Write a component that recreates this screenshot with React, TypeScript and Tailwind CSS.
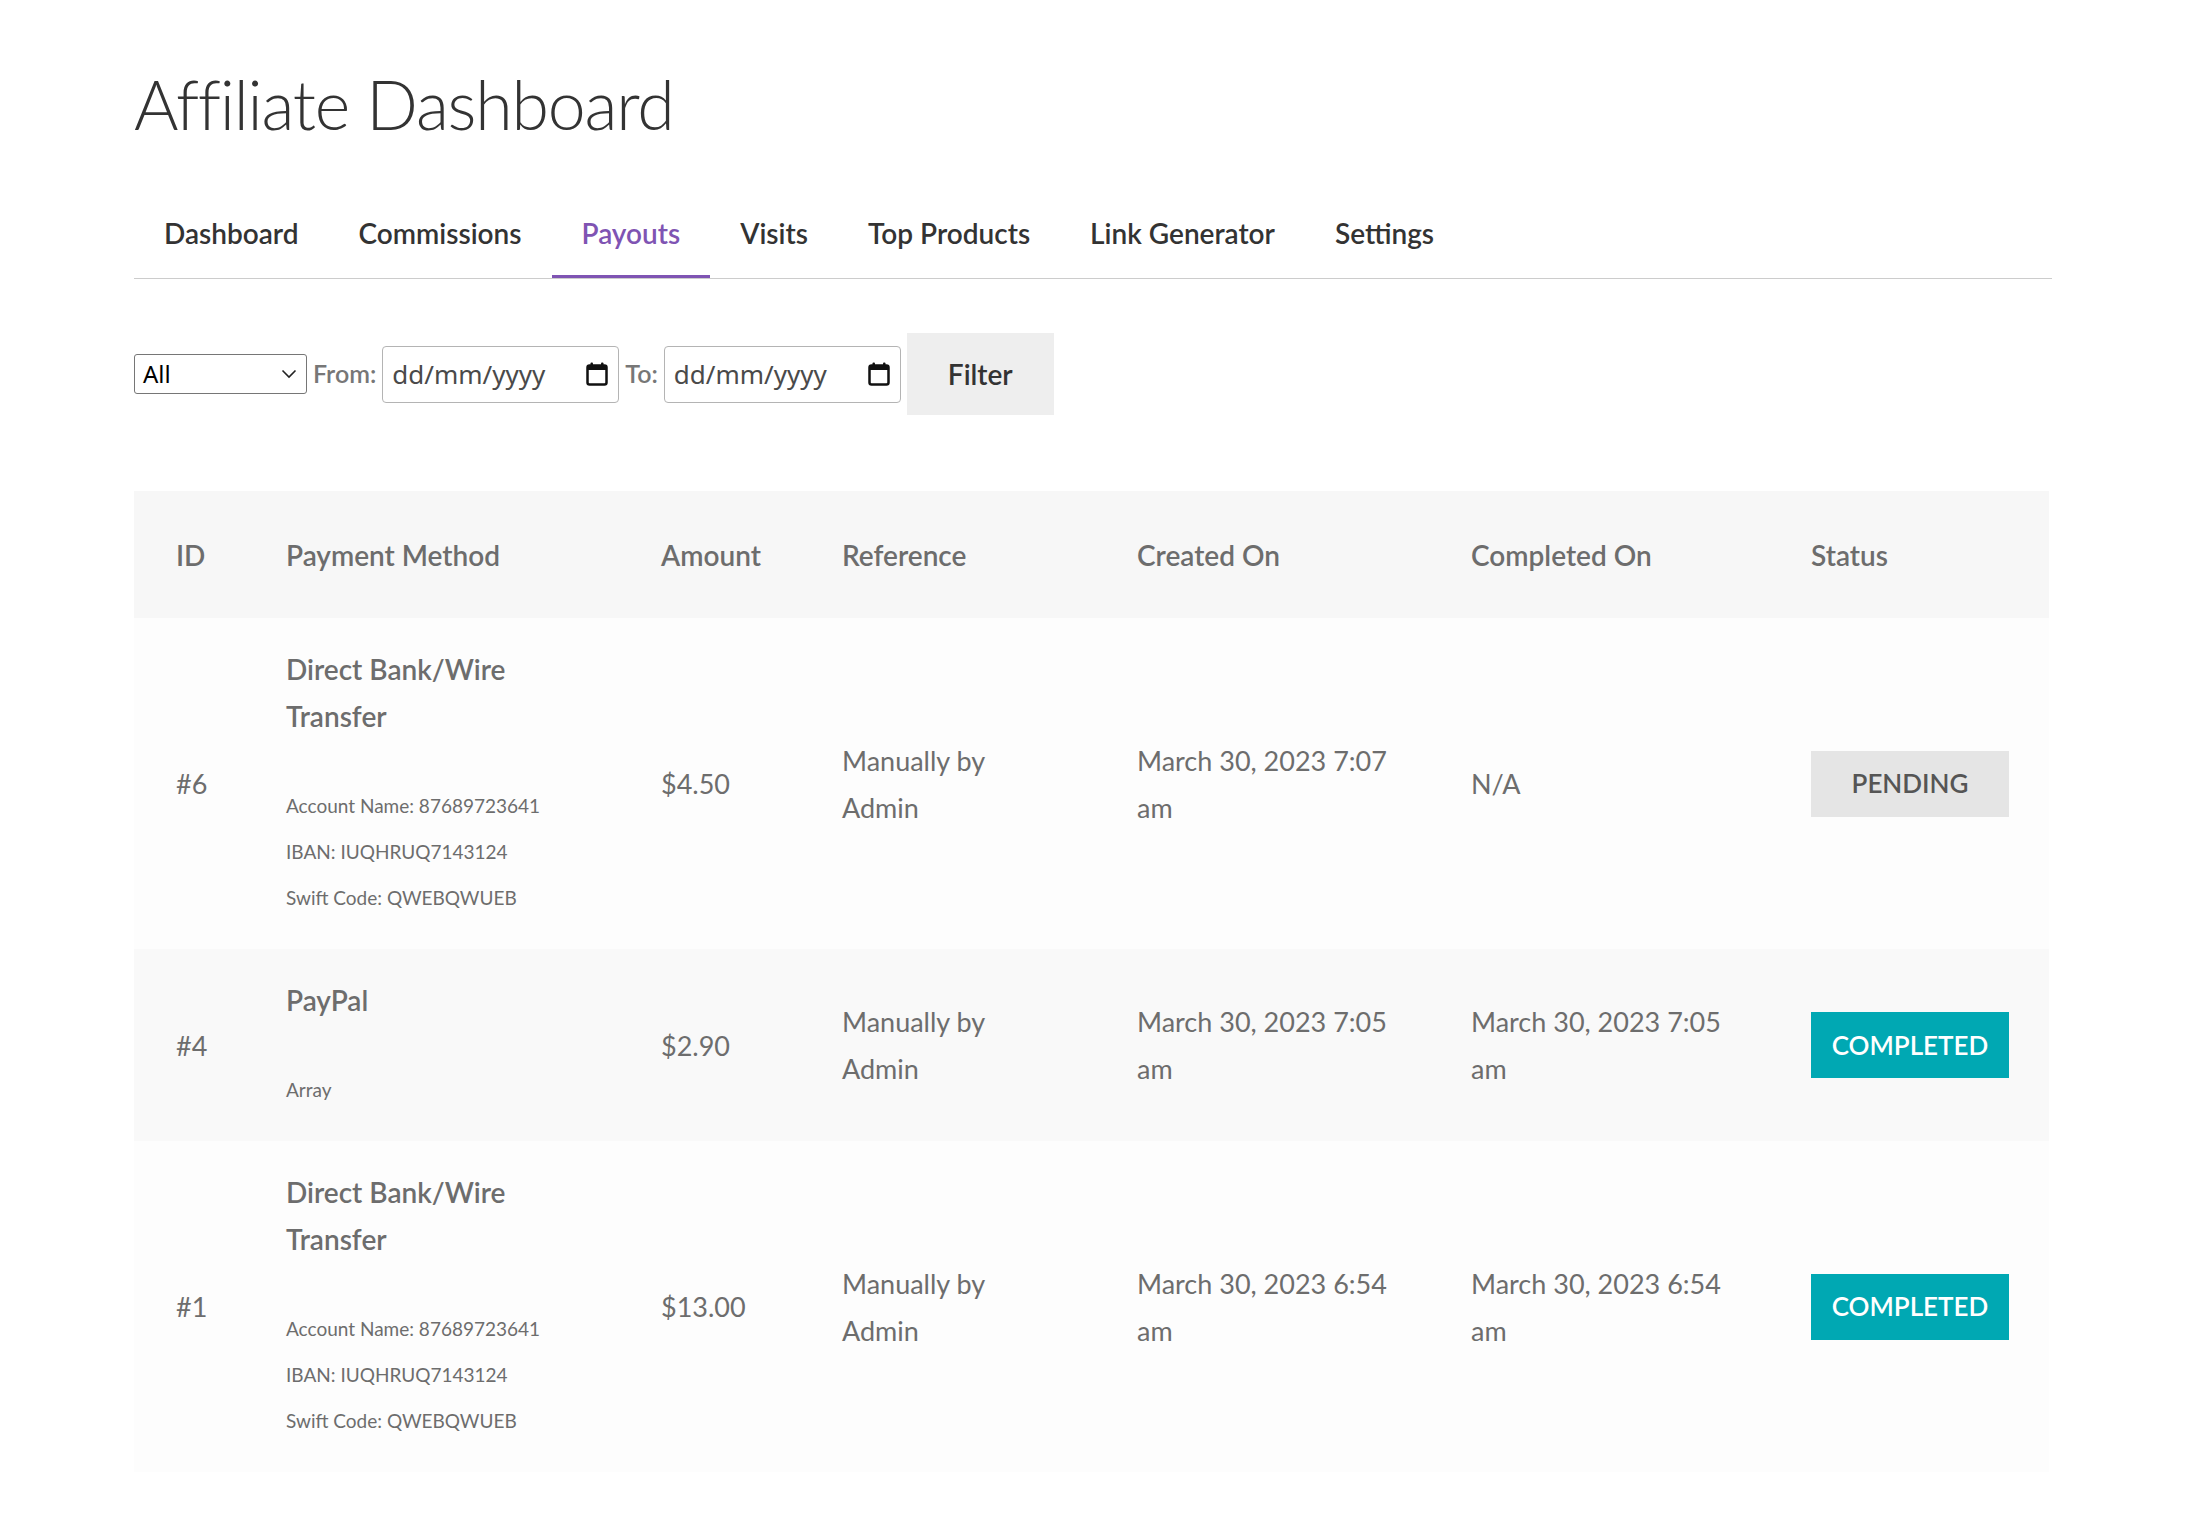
const tabs = ['Dashboard', 'Commissions', 'Payouts', 'Visits', 'Top Products', 'Link Generator', 'Settings']

const columns = ['ID', 'Payment Method', 'Amount', 'Reference', 'Created On', 'Completed On', 'Status']

type Payout = {
  id: string
  method: string
  details: string[]
  amount: string
  reference: string
  created: string
  completed: string
  status: 'pending' | 'completed'
}

const payouts: Payout[] = [
  {
    id: '#6',
    method: 'Direct Bank/Wire Transfer',
    details: ['Account Name: 87689723641', 'IBAN: IUQHRUQ7143124', 'Swift Code: QWEBQWUEB'],
    amount: '$4.50',
    reference: 'Manually by Admin',
    created: 'March 30, 2023 7:07 am',
    completed: 'N/A',
    status: 'pending',
  },
  {
    id: '#4',
    method: 'PayPal',
    details: ['Array'],
    amount: '$2.90',
    reference: 'Manually by Admin',
    created: 'March 30, 2023 7:05 am',
    completed: 'March 30, 2023 7:05 am',
    status: 'completed',
  },
  {
    id: '#1',
    method: 'Direct Bank/Wire Transfer',
    details: ['Account Name: 87689723641', 'IBAN: IUQHRUQ7143124', 'Swift Code: QWEBQWUEB'],
    amount: '$13.00',
    reference: 'Manually by Admin',
    created: 'March 30, 2023 6:54 am',
    completed: 'March 30, 2023 6:54 am',
    status: 'completed',
  },
]

const grid = 'grid grid-cols-[110px_375px_181px_295px_334px_340px_280px]'

function CalendarIcon() {
  return (
    <svg width="22" height="24" viewBox="0 0 22 24" fill="none">
      <rect x="1.5" y="3.5" width="19" height="19" rx="2" stroke="#111" strokeWidth="2.5" />
      <rect x="1.5" y="3.5" width="19" height="4.5" fill="#111" />
      <rect x="4.5" y="0.5" width="2.5" height="4" rx="1" fill="#111" />
      <rect x="15" y="0.5" width="2.5" height="4" rx="1" fill="#111" />
    </svg>
  )
}

function DateField() {
  return (
    <div className="flex h-[57px] w-[237px] items-center justify-between rounded-[4px] border border-[#b4b4b4] bg-white pl-[9px] pr-[10px]">
      <span className="font-['Noto_Sans',sans-serif] text-[26px] text-[#4a4a4a]">dd/mm/yyyy</span>
      <CalendarIcon />
    </div>
  )
}

export default function App() {
  return (
    <div className="min-h-screen bg-white px-[134px] pt-[62px] font-['Lato',sans-serif] text-[#6d6d6d]">
      <h1 className="text-[68px] font-light leading-[84px] tracking-[-1.2px] text-[#333]">Affiliate Dashboard</h1>

      {/* tabs */}
      <nav className="mt-[67px] flex border-b border-[#cccccc]">
        {tabs.map((tab) => (
          <a
            key={tab}
            className={
              tab === 'Payouts'
                ? 'border-b-[3px] border-[#7f54b3] px-[30px] pb-[22px] text-[28px] font-semibold leading-[40px] text-[#7f54b3]'
                : 'border-b-[3px] border-transparent px-[30px] pb-[22px] text-[28px] font-semibold leading-[40px] text-[#333]'
            }
          >
            {tab}
          </a>
        ))}
      </nav>

      {/* filter bar */}
      <div className="mt-[54px] flex items-center gap-[6px]">
        <div className="flex h-[40px] w-[173px] items-center justify-between rounded-[3px] border border-[#767676] bg-white pl-[8px] pr-[9px]">
          <span className="font-['Noto_Sans',sans-serif] text-[24px] text-black">All</span>
          <svg width="16" height="10" viewBox="0 0 16 10" fill="none">
            <path d="M1.5 1.5 L8 8 L14.5 1.5" stroke="#222" strokeWidth="1.6" />
          </svg>
        </div>
        <span className="text-[25px] font-semibold text-[#777]">From:</span>
        <DateField />
        <span className="text-[25px] font-semibold text-[#777]">To:</span>
        <DateField />
        <button className="h-[82px] w-[147px] bg-[#eeeeee] text-[28px] font-semibold text-[#333]">Filter</button>
      </div>

      {/* payouts table */}
      <div className="mt-[76px] w-[1915px]">
        <div className={`${grid} h-[127px] items-center bg-[#f7f7f7]`}>
          {columns.map((col) => (
            <div key={col} className="pl-[42px] pr-[34px] text-[28px] font-semibold">
              {col}
            </div>
          ))}
        </div>

        {payouts.map((p, i) => (
          <div
            key={p.id}
            className={`${grid} items-center py-[28px] text-[27px] leading-[47px] ${i % 2 === 1 ? 'bg-[#f9f9f9]' : 'bg-[#fdfdfd]'}`}
          >
            <div className="pl-[42px] pr-[34px]">{p.id}</div>
            <div className="pl-[42px] pr-[34px]">
              <div className="text-[28px] font-semibold">{p.method}</div>
              <div className="mt-[43px] text-[19px] leading-[46px]">
                {p.details.map((d) => (
                  <div key={d}>{d}</div>
                ))}
              </div>
            </div>
            <div className="pl-[42px] pr-[34px]">{p.amount}</div>
            <div className="pl-[42px] pr-[34px]">{p.reference}</div>
            <div className="pl-[42px] pr-[34px]">{p.created}</div>
            <div className="pl-[42px] pr-[34px]">{p.completed}</div>
            <div className="pl-[42px]">
              {p.status === 'pending' ? (
                <span className="flex h-[66px] w-[198px] items-center justify-center bg-[#e5e5e5] text-[26px] font-semibold uppercase text-[#555]">
                  Pending
                </span>
              ) : (
                <span className="flex h-[66px] w-[198px] items-center justify-center bg-[#00a8b3] text-[26px] font-semibold uppercase text-white">
                  Completed
                </span>
              )}
            </div>
          </div>
        ))}
      </div>
    </div>
  )
}
